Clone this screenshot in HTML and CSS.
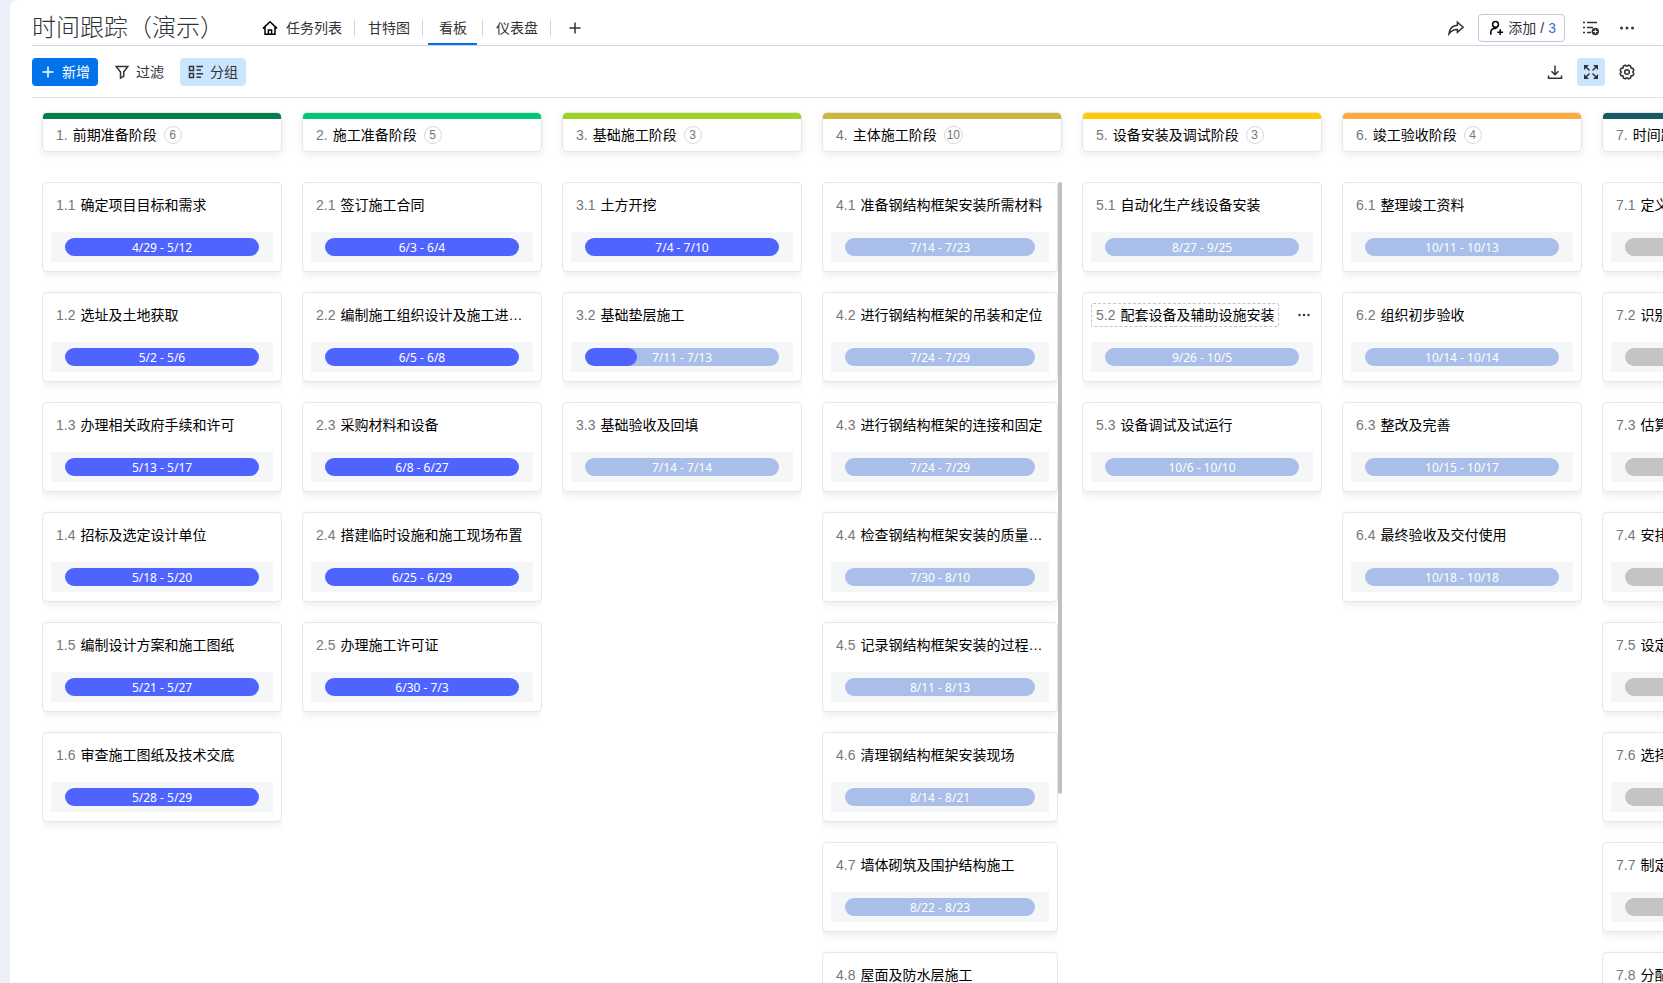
FILE: index.html
```html
<!DOCTYPE html>
<html lang="zh-CN">
<head>
<meta charset="utf-8">
<title>时间跟踪（演示）</title>
<link rel="stylesheet" href="styles.css">
</head>
<body>
<main class="panel">
  <header class="topbar">
    <h1 class="title">时间跟踪（演示）</h1>
    <nav class="tabs">
      <a class="tab" href="#list"><svg class="icon dark" viewBox="0 0 16 16"><path d="M1 8.4 8 1.8l7 6.6M3 7v7.2h10V7M6.4 14v-4h3.2v4"/></svg>任务列表</a>
      <a class="tab" href="#gantt">甘特图</a>
      <a class="tab active" href="#board">看板</a>
      <a class="tab" href="#dash">仪表盘</a>
      <button class="add-tab" aria-label="添加视图"><svg class="icon" viewBox="0 0 16 16"><path d="M8 2.500v11M2.500 8h11"/></svg></button>
    </nav>
    <div class="actions">
      <button class="icon-btn" aria-label="分享"><svg class="icon" viewBox="0 0 16 16"><path d="M9.400 2.200 15.200 7.300l-5.800 5.100V9.500C6 9.300 3.400 10.500 1 13.700 1.500 9 4.500 5.500 9.400 5.200z"/></svg></button>
      <button class="member-btn"><svg class="icon dark" viewBox="0 0 16 16"><circle cx="7.500" cy="4.400" r="2.900"/><path d="M2.800 14.800v-2c0-2.400 1.600-4.200 4-4.200h1.800M12.200 9.300v5.800M9.300 12.200h5.800"/></svg><span>添加</span><span>/</span><span class="num">3</span></button>
      <button class="icon-btn list-btn" aria-label="列表设置"><svg class="icon" viewBox="0 0 16 16"><path d="M4 2.500h10M4 7.500h6M4 12.500h4M0 2.500h2M0 7.500h2M0 12.500h2"/><circle class="solid" cx="12.300" cy="11.500" r="3.700"/><path class="cut" d="M12.300 9.500v4M10.300 11.500h4"/></svg></button>
      <button class="icon-btn" aria-label="更多"><svg class="icon" viewBox="0 0 16 16"><g class="dots"><circle cx="2.500" cy="8" r="1.500"/><circle cx="8" cy="8" r="1.500"/><circle cx="13.500" cy="8" r="1.500"/></g></svg></button>
    </div>
  </header>

  <div class="toolbar">
    <button class="btn primary"><svg class="icon" viewBox="0 0 16 16"><path d="M8 2.500v11M2.500 8h11"/></svg>新增</button>
    <button class="btn"><svg class="icon" viewBox="0 0 16 16"><path d="M2.200 2.500h11.600L9.700 8v4.300L6.500 14V8z"/></svg>过滤</button>
    <button class="btn selected"><svg class="icon" viewBox="0 0 16 16"><path d="M1.500 2.500h4v4h-4zM1.500 9.500h4v4h-4zM8.500 2.500H15M8.500 6h4.500M8.500 9.800H15M8.500 13.300h4.500"/></svg>分组</button>
    <div class="actions">
      <button class="icon-btn" aria-label="下载"><svg class="icon" viewBox="0 0 16 16"><path d="M8 1.500v9M4.500 7.200 8 10.700l3.500-3.500M1.500 11.500v2.700h13v-2.700"/></svg></button>
      <button class="icon-btn selected" aria-label="全屏"><svg class="icon" viewBox="0 0 16 16"><path class="solid" d="M1 1h5L1 6zM15 1v5l-5-5zM15 15h-5l5-5zM1 15v-5l5 5z"/><path d="M2.500 2.500l4 4M13.500 2.500l-4 4M13.500 13.500l-4-4M2.500 13.500l4-4"/></svg></button>
      <button class="icon-btn" aria-label="设置"><svg class="icon" viewBox="0 0 16 16"><path d="M6.400 1.200 8 2.300l1.600-1.100 2 .8.400 2 2 .4.800 2L13.700 8l1.100 1.600-.8 2-2 .4-.4 2-2 .8L8 13.700l-1.600 1.100-2-.8-.4-2-2-.4-.8-2L2.300 8 1.200 6.400l.8-2 2-.4.400-2z"/><circle cx="8" cy="8" r="2.300"/></svg></button>
    </div>
  </div>

  <div class="board">
    <section class="column">
      <h2 class="group c1"><span class="no">1.</span>前期准备阶段<span class="count">6</span></h2>
      <div class="list">
        <article class="card"><h3 class="name"><span class="no">1.1</span><span class="text">确定项目目标和需求</span></h3><div class="track"><div class="pill done">4/29 - 5/12</div></div></article>
        <article class="card"><h3 class="name"><span class="no">1.2</span><span class="text">选址及土地获取</span></h3><div class="track"><div class="pill done">5/2 - 5/6</div></div></article>
        <article class="card"><h3 class="name"><span class="no">1.3</span><span class="text">办理相关政府手续和许可</span></h3><div class="track"><div class="pill done">5/13 - 5/17</div></div></article>
        <article class="card"><h3 class="name"><span class="no">1.4</span><span class="text">招标及选定设计单位</span></h3><div class="track"><div class="pill done">5/18 - 5/20</div></div></article>
        <article class="card"><h3 class="name"><span class="no">1.5</span><span class="text">编制设计方案和施工图纸</span></h3><div class="track"><div class="pill done">5/21 - 5/27</div></div></article>
        <article class="card"><h3 class="name"><span class="no">1.6</span><span class="text">审查施工图纸及技术交底</span></h3><div class="track"><div class="pill done">5/28 - 5/29</div></div></article>
      </div>
    </section>

    <section class="column">
      <h2 class="group c2"><span class="no">2.</span>施工准备阶段<span class="count">5</span></h2>
      <div class="list">
        <article class="card"><h3 class="name"><span class="no">2.1</span><span class="text">签订施工合同</span></h3><div class="track"><div class="pill done">6/3 - 6/4</div></div></article>
        <article class="card"><h3 class="name"><span class="no">2.2</span><span class="text">编制施工组织设计及施工进…</span></h3><div class="track"><div class="pill done">6/5 - 6/8</div></div></article>
        <article class="card"><h3 class="name"><span class="no">2.3</span><span class="text">采购材料和设备</span></h3><div class="track"><div class="pill done">6/8 - 6/27</div></div></article>
        <article class="card"><h3 class="name"><span class="no">2.4</span><span class="text">搭建临时设施和施工现场布置</span></h3><div class="track"><div class="pill done">6/25 - 6/29</div></div></article>
        <article class="card"><h3 class="name"><span class="no">2.5</span><span class="text">办理施工许可证</span></h3><div class="track"><div class="pill done">6/30 - 7/3</div></div></article>
      </div>
    </section>

    <section class="column">
      <h2 class="group c3"><span class="no">3.</span>基础施工阶段<span class="count">3</span></h2>
      <div class="list">
        <article class="card"><h3 class="name"><span class="no">3.1</span><span class="text">土方开挖</span></h3><div class="track"><div class="pill done">7/4 - 7/10</div></div></article>
        <article class="card"><h3 class="name"><span class="no">3.2</span><span class="text">基础垫层施工</span></h3><div class="track"><div class="pill"><span class="fill" style="width:27%"></span>7/11 - 7/13</div></div></article>
        <article class="card"><h3 class="name"><span class="no">3.3</span><span class="text">基础验收及回填</span></h3><div class="track"><div class="pill">7/14 - 7/14</div></div></article>
      </div>
    </section>

    <section class="column">
      <h2 class="group c4"><span class="no">4.</span>主体施工阶段<span class="count">10</span></h2>
      <div class="scroller">
        <div class="list">
          <article class="card"><h3 class="name"><span class="no">4.1</span><span class="text">准备钢结构框架安装所需材料</span></h3><div class="track"><div class="pill">7/14 - 7/23</div></div></article>
          <article class="card"><h3 class="name"><span class="no">4.2</span><span class="text">进行钢结构框架的吊装和定位</span></h3><div class="track"><div class="pill">7/24 - 7/29</div></div></article>
          <article class="card"><h3 class="name"><span class="no">4.3</span><span class="text">进行钢结构框架的连接和固定</span></h3><div class="track"><div class="pill">7/24 - 7/29</div></div></article>
          <article class="card"><h3 class="name"><span class="no">4.4</span><span class="text">检查钢结构框架安装的质量…</span></h3><div class="track"><div class="pill">7/30 - 8/10</div></div></article>
          <article class="card"><h3 class="name"><span class="no">4.5</span><span class="text">记录钢结构框架安装的过程…</span></h3><div class="track"><div class="pill">8/11 - 8/13</div></div></article>
          <article class="card"><h3 class="name"><span class="no">4.6</span><span class="text">清理钢结构框架安装现场</span></h3><div class="track"><div class="pill">8/14 - 8/21</div></div></article>
          <article class="card"><h3 class="name"><span class="no">4.7</span><span class="text">墙体砌筑及围护结构施工</span></h3><div class="track"><div class="pill">8/22 - 8/23</div></div></article>
          <article class="card"><h3 class="name"><span class="no">4.8</span><span class="text">屋面及防水层施工</span></h3><div class="track"><div class="pill"></div></div></article>
        </div>
        <div class="thumb"></div>
      </div>
    </section>

    <section class="column">
      <h2 class="group c5"><span class="no">5.</span>设备安装及调试阶段<span class="count">3</span></h2>
      <div class="list">
        <article class="card"><h3 class="name"><span class="no">5.1</span><span class="text">自动化生产线设备安装</span></h3><div class="track"><div class="pill">8/27 - 9/25</div></div></article>
        <article class="card"><div class="head"><h3 class="name editing"><span class="no">5.2</span><span class="text">配套设备及辅助设施安装</span></h3><button class="card-more" aria-label="更多"><svg viewBox="0 0 12 4"><g class="dots"><circle cx="1.500" cy="2" r="1.200"/><circle cx="6" cy="2" r="1.200"/><circle cx="10.500" cy="2" r="1.200"/></g></svg></button></div><div class="track"><div class="pill">9/26 - 10/5</div></div></article>
        <article class="card"><h3 class="name"><span class="no">5.3</span><span class="text">设备调试及试运行</span></h3><div class="track"><div class="pill">10/6 - 10/10</div></div></article>
      </div>
    </section>

    <section class="column">
      <h2 class="group c6"><span class="no">6.</span>竣工验收阶段<span class="count">4</span></h2>
      <div class="list">
        <article class="card"><h3 class="name"><span class="no">6.1</span><span class="text">整理竣工资料</span></h3><div class="track"><div class="pill">10/11 - 10/13</div></div></article>
        <article class="card"><h3 class="name"><span class="no">6.2</span><span class="text">组织初步验收</span></h3><div class="track"><div class="pill">10/14 - 10/14</div></div></article>
        <article class="card"><h3 class="name"><span class="no">6.3</span><span class="text">整改及完善</span></h3><div class="track"><div class="pill">10/15 - 10/17</div></div></article>
        <article class="card"><h3 class="name"><span class="no">6.4</span><span class="text">最终验收及交付使用</span></h3><div class="track"><div class="pill">10/18 - 10/18</div></div></article>
      </div>
    </section>

    <section class="column">
      <h2 class="group c7"><span class="no">7.</span>时间跟踪</h2>
      <div class="list">
        <article class="card"><h3 class="name"><span class="no">7.1</span><span class="text">定义</span></h3><div class="track"><div class="pill none"></div></div></article>
        <article class="card"><h3 class="name"><span class="no">7.2</span><span class="text">识别</span></h3><div class="track"><div class="pill none"></div></div></article>
        <article class="card"><h3 class="name"><span class="no">7.3</span><span class="text">估算</span></h3><div class="track"><div class="pill none"></div></div></article>
        <article class="card"><h3 class="name"><span class="no">7.4</span><span class="text">安排</span></h3><div class="track"><div class="pill none"></div></div></article>
        <article class="card"><h3 class="name"><span class="no">7.5</span><span class="text">设定</span></h3><div class="track"><div class="pill none"></div></div></article>
        <article class="card"><h3 class="name"><span class="no">7.6</span><span class="text">选择</span></h3><div class="track"><div class="pill none"></div></div></article>
        <article class="card"><h3 class="name"><span class="no">7.7</span><span class="text">制定</span></h3><div class="track"><div class="pill none"></div></div></article>
        <article class="card"><h3 class="name"><span class="no">7.8</span><span class="text">分配</span></h3><div class="track"><div class="pill none"></div></div></article>
      </div>
    </section>
  </div>
</main>
</body>
</html>
```

FILE: styles.css
```css
* {
  box-sizing: border-box;
}

body {
  margin: 0;
  height: 100vh;
  padding-left: 10px;
  overflow: hidden;
  background: #eceff8;
  color: #323338;
  font: 14px/20px "Liberation Sans", "Noto Sans CJK SC", sans-serif;
}

h1, h2, h3 {
  margin: 0;
  font-weight: 400;
}

button {
  padding: 0;
  border: 0;
  background: none;
  color: inherit;
  font: inherit;
}

.panel {
  display: flex;
  flex-direction: column;
  height: 100%;
  padding-left: 22px;
  border-top-left-radius: 8px;
  background: #fff;
}

.icon {
  flex: none;
  width: 16px;
  height: 16px;
  fill: none;
  stroke: #323338;
  stroke-width: 1.5;
}

.icon .solid {
  fill: #323338;
  stroke: none;
}

.icon .cut {
  stroke: #fff;
  stroke-width: 1;
}

.icon.dark {
  stroke: #000;
}

.icon .dots,
.dots {
  fill: #323338;
  stroke: none;
}

/* Top bar */
.topbar {
  display: flex;
  flex: none;
  height: 46px;
  padding-right: 22px;
  border-bottom: 1px solid #d0d4e4;
}

.title {
  width: 217px;
  padding-top: 10px;
  font-size: 24px;
  font-weight: 300;
  line-height: 36px;
  white-space: nowrap;
}

.tabs {
  display: flex;
  align-items: center;
}

.tab {
  display: flex;
  align-items: center;
  gap: 8px;
  position: relative;
  height: 45px;
  margin: 0 2px;
  padding: 10px 10px 0 11px;
  color: #323338;
  text-decoration: none;
}

.tab::after {
  content: "";
  position: absolute;
  top: 20px;
  right: -3px;
  width: 1px;
  height: 16px;
  background: #d0d4e4;
}

.tab + .tab,
.add-tab {
  margin-left: 3px;
}

.tab.active {
  margin: 0 5px 0 6px;
  border-bottom: 2px solid #0073ea;
  padding-top: 12px;
}

.tab.active::after {
  right: -6px;
}

.add-tab {
  display: flex;
  padding: 11px 10px 0 14px;
}

.actions {
  display: flex;
  gap: 8px;
  margin-left: auto;
}

.topbar .actions {
  padding-top: 14px;
}

.icon-btn {
  display: flex;
  align-items: center;
  justify-content: center;
  width: 28px;
  height: 28px;
  border-radius: 4px;
}

.member-btn {
  display: flex;
  align-items: center;
  gap: 4px;
  height: 28px;
  padding: 0 8px 0 9px;
  border: 1px solid #c3c6d4;
  border-radius: 4px;
}

.list-btn {
  margin-left: 4px;
}

.num {
  color: #4169e1;
}

/* Toolbar */
.toolbar {
  display: flex;
  flex: none;
  align-items: center;
  height: 52px;
  padding-right: 22px;
  border-bottom: 1px solid #e0e2e8;
}

.btn {
  display: flex;
  align-items: center;
  gap: 6px;
  height: 28px;
  margin-right: 8px;
  padding: 0 8px;
  border-radius: 4px;
}

.primary {
  background: #0073ea;
  color: #fff;
}

.primary .icon {
  stroke: #fff;
}

.selected {
  background: #cce5ff;
}

/* Board */
.board {
  display: flex;
  flex: 1;
  gap: 20px;
  min-height: 0;
  padding: 14px 0 0 10px;
  overflow: hidden;
}

.column {
  display: flex;
  flex: none;
  flex-direction: column;
  gap: 30px;
  width: 240px;
}

.group {
  display: flex;
  flex: none;
  align-items: center;
  gap: 5px;
  position: relative;
  height: 40px;
  padding: 6px 13px 0;
  border: 1px solid #e6e6ea;
  border-radius: 5px;
  overflow: hidden;
  box-shadow: 0 3px 8px rgba(0, 0, 0, 0.08);
  color: #000;
  font-size: 14px;
  white-space: nowrap;
}

.group::before {
  content: "";
  position: absolute;
  inset: 0 0 auto;
  height: 6px;
  background: currentColor;
}

.c1::before { background: #037f4c; }
.c2::before { background: #00c875; }
.c3::before { background: #9cd326; }
.c4::before { background: #cab641; }
.c5::before { background: #ffcb00; }
.c6::before { background: #fdab3d; }
.c7::before { background: #175a63; }

.no {
  flex: none;
  color: #777;
}

.count {
  min-width: 18px;
  height: 18px;
  margin-left: 2px;
  padding: 0 2px;
  border: 1px solid #d8d8dc;
  border-radius: 9px;
  color: #777;
  font-size: 12px;
  line-height: 16px;
  text-align: center;
}

.list {
  display: flex;
  flex: 1;
  flex-direction: column;
  gap: 20px;
  min-width: 0;
  min-height: 0;
  overflow: hidden;
}

.scroller {
  display: flex;
  flex: 1;
  min-height: 0;
}

.thumb {
  width: 4px;
  height: 612px;
  border-radius: 2px;
  background: #c1c1c1;
}

.card {
  flex: none;
  padding: 10px 8px 9px;
  border: 1px solid #e6e6ea;
  border-radius: 5px;
  background: #fff;
  box-shadow: 0 3px 8px rgba(0, 0, 0, 0.08);
}

.name {
  display: flex;
  gap: 5px;
  height: 24px;
  padding: 0 4px;
  border: 1px solid transparent;
  color: #000;
  font-size: 14px;
  line-height: 22px;
}

.text {
  min-width: 0;
  overflow: hidden;
  text-overflow: ellipsis;
  white-space: nowrap;
}

.head {
  display: flex;
  align-items: center;
  justify-content: space-between;
}

.editing {
  border: 1px dashed #c4c4c4;
  border-radius: 2px;
}

.card-more {
  display: flex;
  width: 12px;
  margin-right: 3px;
}

.card-more svg {
  width: 12px;
  height: 4px;
}

.track {
  margin-top: 15px;
  padding: 6px 14px;
  background: #f5f6f8;
}

.pill {
  position: relative;
  height: 18px;
  border-radius: 9px;
  overflow: hidden;
  background: #a9bee8;
  color: #fff;
  font: 12px/19px "Noto Sans", sans-serif;
  text-align: center;
}

.done,
.fill {
  background: #4f64ff;
}

.none {
  background: #c4c4c4;
}

.fill {
  position: absolute;
  inset: 0 auto 0 0;
  border-radius: 9px;
}
```
